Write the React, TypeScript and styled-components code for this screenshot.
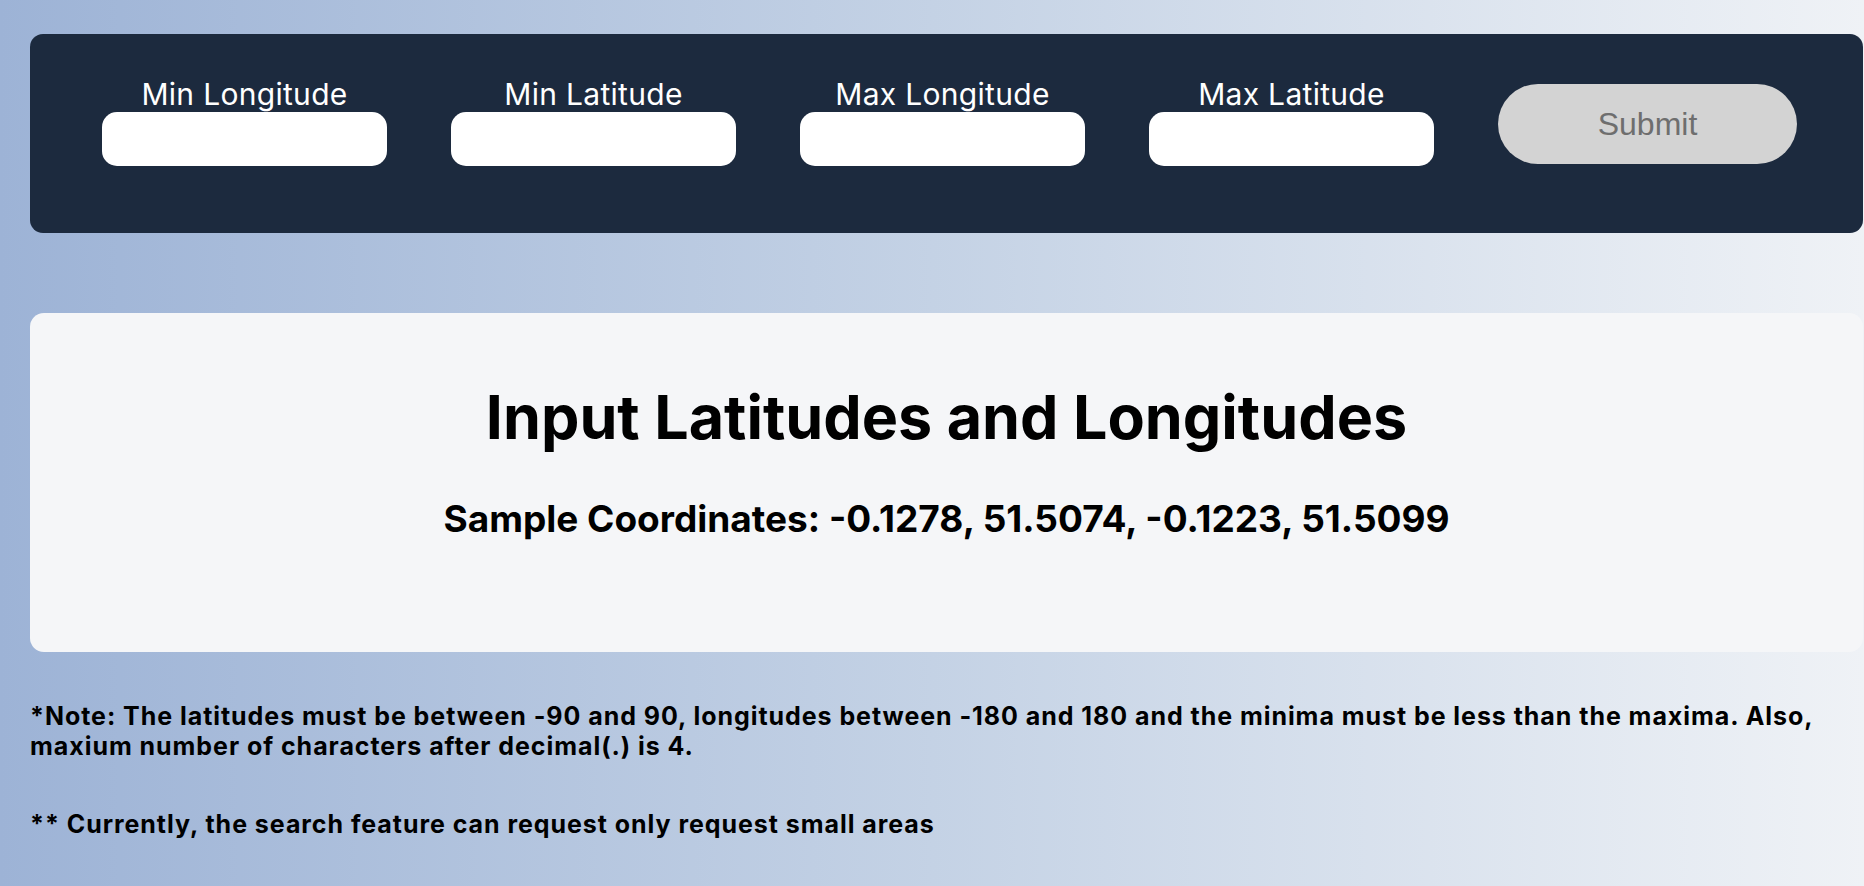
import React from "react";
import styled, { createGlobalStyle } from "styled-components";

const GlobalStyle = createGlobalStyle`
  html, body {
    margin: 0;
    padding: 0;
  }
  body {
    min-height: 100vh;
    background: linear-gradient(to right, #9db3d6 0%, #c4d2e5 50%, #eff2f6 100%);
    font-family: Inter, "Noto Sans", sans-serif;
    color: #000;
  }
`;

const Page = styled.div`
  min-height: 886px;
  padding: 34px 1px 40px 30px;
  box-sizing: border-box;
`;

const SearchBar = styled.form`
  height: 199px;
  box-sizing: border-box;
  background: #1c2a3e;
  border-radius: 13px;
  display: flex;
  align-items: flex-start;
  gap: 64px;
  padding: 43px 0 0 72px;
`;

const Field = styled.label`
  display: flex;
  flex-direction: column;
  align-items: center;
  width: 285px;
`;

const FieldLabel = styled.span`
  color: #ffffff;
  font-size: 30px;
  line-height: 35px;
  letter-spacing: 0.3px;
  font-weight: 400;
  white-space: nowrap;
`;

const CoordInput = styled.input`
  width: 285px;
  height: 54px;
  box-sizing: border-box;
  border: none;
  border-radius: 15px;
  background: #ffffff;
  outline: none;
  padding: 0 14px;
  font-family: inherit;
  font-size: 22px;
`;

const SubmitButton = styled.button`
  margin-top: 7px;
  width: 299px;
  height: 80px;
  border: none;
  border-radius: 40px;
  background: #d3d3d3;
  color: #6e6e6e;
  font-family: "Liberation Sans", Arial, sans-serif;
  font-size: 32px;
  cursor: default;
`;

const InfoCard = styled.section`
  margin-top: 80px;
  height: 339px;
  box-sizing: border-box;
  background: #f5f6f8;
  border-radius: 14px;
  padding-top: 68px;
  text-align: center;
`;

const Title = styled.h1`
  margin: 0;
  font-size: 61px;
  line-height: 72px;
  font-weight: 700;
`;

const Sample = styled.h2`
  margin: 44px 0 0;
  font-size: 37px;
  line-height: 43px;
  font-weight: 700;
`;

const Notes = styled.div`
  margin-top: 49px;
  display: flex;
  flex-direction: column;
  gap: 48px;
`;

const Note = styled.p`
  margin: 0;
  font-size: 25px;
  line-height: 30px;
  letter-spacing: 0.95px;
  font-weight: 700;
`;

const fields = ["Min Longitude", "Min Latitude", "Max Longitude", "Max Latitude"];

export default function App() {
  return (
    <>
      <GlobalStyle />
      <Page>
        <SearchBar onSubmit={(e) => e.preventDefault()}>
          {fields.map((f) => (
            <Field key={f}>
              <FieldLabel>{f}</FieldLabel>
              <CoordInput type="text" />
            </Field>
          ))}
          <SubmitButton type="submit" disabled>
            Submit
          </SubmitButton>
        </SearchBar>
        <InfoCard>
          <Title>Input Latitudes and Longitudes</Title>
          <Sample>Sample Coordinates: -0.1278, 51.5074, -0.1223, 51.5099</Sample>
        </InfoCard>
        <Notes>
          <Note>
            *Note: The latitudes must be between -90 and 90, longitudes between -180 and 180 and the
            minima must be less than the maxima. Also, maxium number of characters after decimal(.) is 4.
          </Note>
          <Note>** Currently, the search feature can request only request small areas</Note>
        </Notes>
      </Page>
    </>
  );
}
